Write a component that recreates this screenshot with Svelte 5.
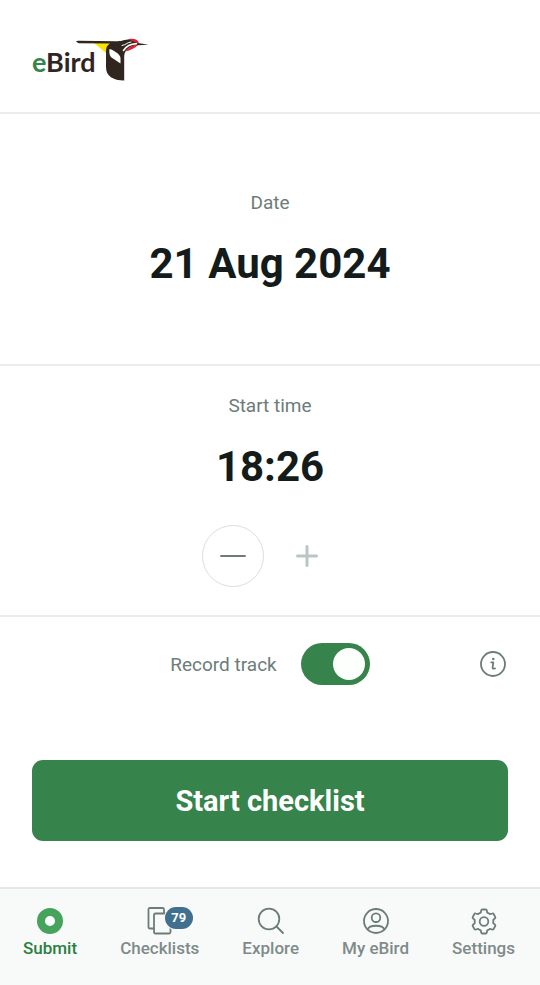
<script lang="ts">
	let recordTrack = $state(true);
	let hour = 18;
	let minute = $state(26);

	const latest = 26;
	const pending = 79;

	const time = $derived(`${hour}:${String(minute).padStart(2, '0')}`);

	const tabs = [
		{ id: 'submit', label: 'Submit' },
		{ id: 'checklists', label: 'Checklists' },
		{ id: 'explore', label: 'Explore' },
		{ id: 'profile', label: 'My eBird' },
		{ id: 'settings', label: 'Settings' }
	];

	let active = $state('submit');
</script>

<svelte:head>
	<title>eBird</title>
</svelte:head>

<div class="app">
	<header>
		<svg class="logo" viewBox="0 0 118 42" role="img" aria-label="eBird">
			<text x="0" y="33"><tspan class="logo-e">e</tspan>Bird</text>
			<path fill="#fce300" d="M62 4H79L76 10L74 14Z" />
			<path
				fill="#30261f"
				d="M44 2.2Q45 1.6 47 1.8L84 2.2C89 2.2 91 1 96 0.4C101 0 104 1.5 106 4L116.500 5.700L106 6.300C101 6.300 97 8 94.500 11C92.800 13 92.200 15 92.200 18V41.500C81 41.500 74 37 74 28V12C74 8.500 75 6.500 78 4.600L47 4.200Q45 3.800 44 2.2Z"
			/>
			<path fill="#fff" d="M77.500 10C80 10.500 88.500 15 88.500 19V24.500L79.500 18.500C77.500 17 77 13 77.500 10Z" />
			<path fill="none" stroke="#fff" stroke-width="1.600" d="M91.500 11.500C94 7.500 97 5 104.500 4.600" />
			<path fill="none" stroke="#fff" stroke-width="1" d="M90 6.500C94 6 94.500 3.500 99 3" />
			<path fill="#e01f30" d="M96.500 0.200C101.500 -1 106 0.500 107 4C104 3.500 100 2 96.500 0.200Z" />
			<path fill="#e01f30" d="M106 6C100.500 6 97 7.500 93.500 12.500C98 11.500 103 9 106 6Z" />
		</svg>
	</header>

	<main>
		<section class="date">
			<h2 id="date-label">Date</h2>
			<button class="value" aria-describedby="date-label">21 Aug 2024</button>
		</section>

		<section class="time">
			<h2 id="time-label">Start time</h2>
			<button class="value" aria-describedby="time-label">{time}</button>
			<div class="stepper">
				<button class="step minus" aria-label="Earlier" disabled={minute === 0} onclick={() => minute--}>
					<svg viewBox="0 0 28 28"><path d="M2 14H26" /></svg>
				</button>
				<button class="step plus" aria-label="Later" disabled={minute >= latest} onclick={() => minute++}>
					<svg viewBox="0 0 28 28"><path d="M4.500 14H23.500M14 4.500V23.500" /></svg>
				</button>
			</div>
		</section>

		<section class="track">
			<div class="track-toggle">
				<label for="record-track">Record track</label>
				<input id="record-track" type="checkbox" role="switch" bind:checked={recordTrack} />
			</div>
			<button class="info" aria-label="About tracks">
				<svg viewBox="0 0 26 26">
					<circle cx="13" cy="13" r="12" />
					<path d="M11.200 11.300H13.300L12.600 16.500Q12.600 18.200 15 17.400" />
					<circle class="dot" cx="13.300" cy="8" r="1.300" />
				</svg>
			</button>
		</section>

		<button class="start">Start checklist</button>
	</main>

	<nav>
		{#each tabs as tab}
			<a
				href="#{tab.id}"
				class:active={active === tab.id}
				aria-current={active === tab.id ? 'page' : undefined}
				onclick={() => (active = tab.id)}
			>
				<span class="icon">
					<svg viewBox="0 0 28 28" aria-hidden="true">
						{#if tab.id === 'submit'}
							<circle class="ring" cx="14" cy="14" r="9" />
						{:else if tab.id === 'checklists'}
							<path d="M8 21.500H4Q2.500 21.500 2.500 20V2.500Q2.500 1 4 1H16.500Q18 1 18 2.500V6" />
							<path d="M24.500 20V25Q24.500 26.500 23 26.500H9.500Q8 26.500 8 25V8Q8 6.500 9.500 6.500H20" />
						{:else if tab.id === 'explore'}
							<circle cx="12" cy="12" r="10.300" />
							<path d="M19.500 19.500L26 26" />
						{:else if tab.id === 'profile'}
							<circle cx="14" cy="14" r="12" />
							<circle cx="14" cy="10.700" r="4.300" />
							<path d="M5.500 22.500C7.500 17.500 20.500 17.500 22.500 22.500" />
						{:else}
							<circle cx="14" cy="14.500" r="4.300" />
							<path
								d="M12.300 2.500H15.700Q16.600 2.500 16.800 3.400L17.200 5.600Q18.700 6.100 19.900 7.200L22.200 6.500Q23.100 6.200 23.600 7L25.200 9.900Q25.700 10.700 25 11.300L23.200 12.900Q23.500 14.500 23.200 16.100L25 17.700Q25.700 18.300 25.200 19.100L23.600 22Q23.100 22.800 22.200 22.500L19.900 21.800Q18.700 22.900 17.200 23.400L16.800 25.600Q16.600 26.500 15.700 26.500H12.300Q11.400 26.500 11.200 25.600L10.800 23.400Q9.300 22.900 8.100 21.800L5.800 22.500Q4.900 22.800 4.400 22L2.800 19.100Q2.300 18.300 3 17.700L4.800 16.100Q4.500 14.500 4.800 12.900L3 11.300Q2.300 10.700 2.800 9.900L4.400 7Q4.900 6.200 5.800 6.500L8.100 7.200Q9.300 6.100 10.800 5.600L11.200 3.400Q11.400 2.500 12.300 2.500Z"
							/>
						{/if}
					</svg>
					{#if tab.id === 'checklists'}
						<span class="badge">{pending}</span>
					{/if}
				</span>
				{tab.label}
			</a>
		{/each}
	</nav>
</div>

<style>
	:global(body) {
		margin: 0;
		background: #fff;
	}

	.app {
		display: flex;
		flex-direction: column;
		min-height: 100vh;
		font-family: Roboto, sans-serif;
		color: #6c7c79;
	}

	button {
		padding: 0;
		border: 0;
		background: none;
		font-family: inherit;
		color: inherit;
		cursor: pointer;
	}

	svg {
		display: block;
		fill: none;
		stroke: currentColor;
		stroke-width: 1.8;
		stroke-linecap: round;
		stroke-linejoin: round;
	}

	header {
		padding: 39px 32px 31px;
		border-bottom: 2px solid #e9edec;
	}

	.logo {
		width: 118px;
		height: 42px;
		stroke: none;
		overflow: visible;
	}

	.logo text {
		font-family: Lato, sans-serif;
		font-size: 27px;
		font-weight: 700;
		fill: #30261f;
	}

	.logo .logo-e {
		fill: #36834b;
	}

	main {
		display: flex;
		flex-direction: column;
	}

	section {
		display: flex;
		flex-direction: column;
		align-items: center;
	}

	.date {
		padding: 77px 32px 75px;
		border-bottom: 2px solid #e9edec;
	}

	.time {
		padding: 28px 32px;
		border-bottom: 2px solid #e9edec;
	}

	h2 {
		margin: 0;
		font-size: 19px;
		line-height: 24px;
		font-weight: 400;
	}

	.value {
		margin-top: 24px;
		font-size: 42px;
		line-height: 50px;
		font-weight: 700;
		color: #141c1b;
	}

	.stepper {
		display: flex;
		gap: 12px;
		margin-top: 33px;
	}

	.step {
		display: grid;
		place-items: center;
		box-sizing: border-box;
		width: 62px;
		height: 62px;
		border-radius: 50%;
	}

	.step:enabled {
		border: 1px solid #dcdfde;
	}

	.step:disabled {
		color: #b9c6c5;
		cursor: default;
	}

	.step svg {
		width: 28px;
		height: 28px;
	}

	.plus svg {
		stroke-width: 3;
	}

	.track {
		display: grid;
		grid-template-columns: 1fr auto 1fr;
		padding: 26px 34px 0;
	}

	.track-toggle {
		display: flex;
		align-items: center;
		grid-column: 2;
		gap: 24px;
		font-size: 19px;
	}

	.track input {
		appearance: none;
		display: flex;
		box-sizing: border-box;
		width: 69px;
		height: 42px;
		margin: 0;
		padding: 5px;
		border-radius: 21px;
		background: #b9c6c5;
		cursor: pointer;
	}

	.track input::before {
		content: '';
		width: 32px;
		height: 32px;
		border-radius: 50%;
		background: #fcfffc;
	}

	.track input:checked {
		justify-content: flex-end;
		background: #36834b;
	}

	.info {
		justify-self: end;
		align-self: center;
	}

	.info svg {
		width: 26px;
		height: 26px;
	}

	.info .dot {
		fill: currentColor;
		stroke: none;
	}

	.start {
		height: 81px;
		margin: 75px 32px 32px;
		border-radius: 11px;
		background: #36834b;
		font-size: 29px;
		font-weight: 700;
		color: #fff;
	}

	nav {
		display: flex;
		justify-content: space-between;
		margin-top: auto;
		padding: 18px 25px 27px 23px;
		border-top: 2px solid #e2e9e7;
		background: #f8faf9;
	}

	nav a {
		display: flex;
		flex-direction: column;
		align-items: center;
		gap: 3px;
		font-size: 17px;
		line-height: 20px;
		font-weight: 500;
		color: #7f8b89;
		text-decoration: none;
	}

	nav a.active {
		color: #2b803f;
	}

	.icon {
		position: relative;
	}

	.icon svg {
		width: 28px;
		height: 28px;
		color: #6c7c79;
	}

	.icon .ring {
		stroke: #46a35b;
		stroke-width: 8;
		fill: #fff;
	}

	.badge {
		position: absolute;
		top: 0;
		left: 19px;
		width: 28px;
		border-radius: 11px;
		background: #41708f;
		box-shadow: 0 0 0 1px #f8faf9;
		font-size: 13px;
		line-height: 22px;
		font-weight: 700;
		color: #fff;
		text-align: center;
	}
</style>
